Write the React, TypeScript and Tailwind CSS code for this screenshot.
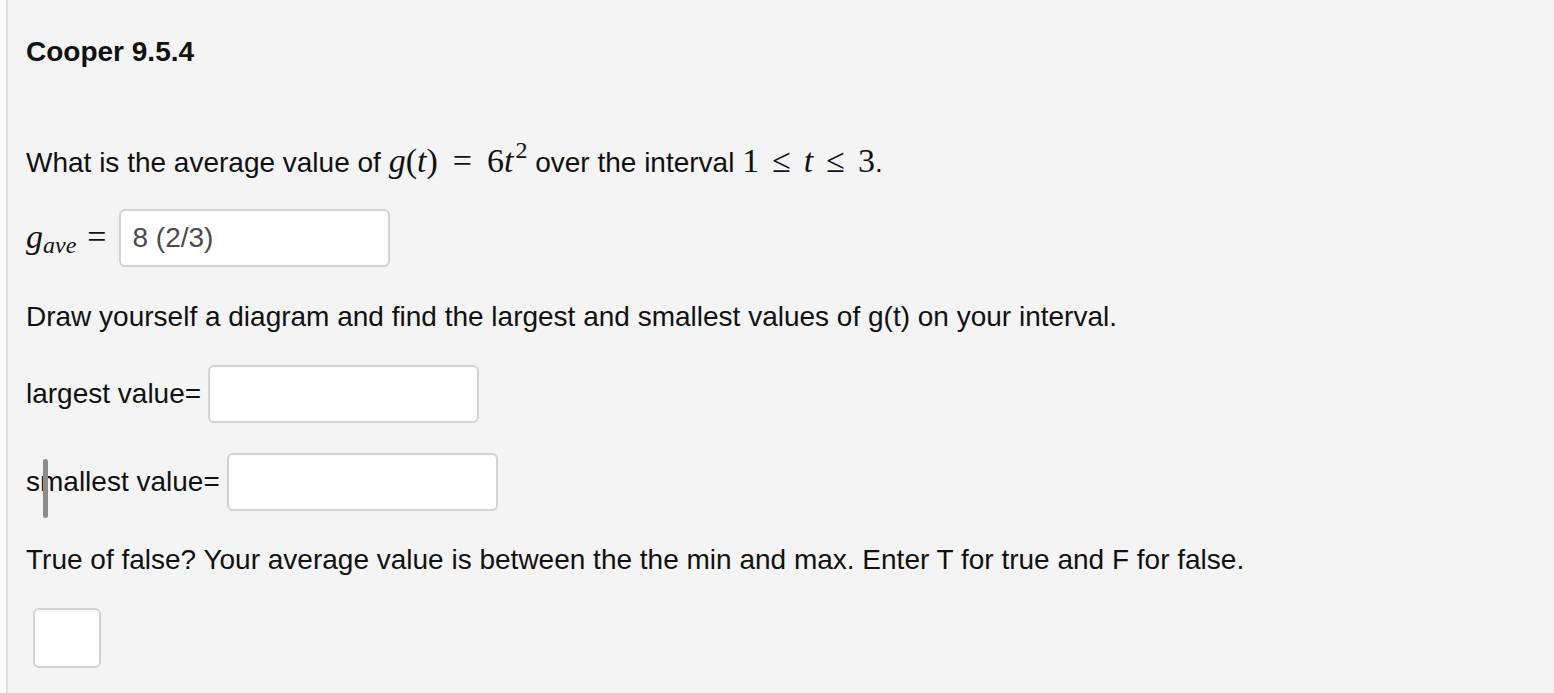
import React from "react";

const serif = { fontFamily: '"Liberation Serif", "DejaVu Serif", serif' } as const;

function MI({ children }: { children: React.ReactNode }) {
  return <span className="italic" style={serif}>{children}</span>;
}
function MU({ children }: { children: React.ReactNode }) {
  return <span style={serif}>{children}</span>;
}

function Box({ w, value }: { w: string; value?: string }) {
  return (
    <div
      className={`${w} h-[58px] rounded-[6px] border-2 border-[#d2d2d2] bg-white flex items-center pl-[12px] text-[28px] text-[#4a4a4a]`}
    >
      {value}
    </div>
  );
}

export default function App() {
  return (
    <div
      className="flex h-[693px] w-full overflow-hidden bg-[#fafafa] text-[#111] text-[28px]"
      style={{ fontFamily: '"Liberation Sans", Arial, sans-serif' }}
    >
      <div className="w-[6px] bg-[#fafafa]" />
      <div className="flex-1 border-l-2 border-[#e0e0e0] bg-[#f4f4f4] pl-[18px] pt-[37px] relative">
        <div className="h-[30px] leading-[30px] font-bold">Cooper 9.5.4</div>

        <div className="mt-[78px] h-[30px] leading-[30px] whitespace-nowrap">
          What is the average value of{" "}
          <span className="text-[34px] leading-[30px]">
            <MI>g</MI>
            <MU>(</MU>
            <MI>t</MI>
            <MU>)</MU>
            <MU>
              <span className="mx-[15px]">=</span>
            </MU>
            <MU>6</MU>
            <MI>t</MI>
            <sup className="text-[24px] relative top-[-14px] ml-[2px]" style={serif}>2</sup>
          </span>{" "}
          over the interval{" "}
          <span className="text-[34px] leading-[30px]">
            <MU>1</MU>
            <MU>
              <span className="mx-[13px]">≤</span>
            </MU>
            <MI>t</MI>
            <MU>
              <span className="mx-[13px]">≤</span>
            </MU>
            <MU>3</MU>
          </span>
          .
        </div>

        <div className="mt-[34px] h-[58px] flex items-center">
          <span className="text-[34px] leading-[30px] whitespace-nowrap">
            <MI>g</MI>
            <span className="italic text-[24px] relative top-[5px]" style={serif}>ave</span>
            <MU>
              <span className="ml-[11px] mr-[12px]">=</span>
            </MU>
          </span>
          <Box w="w-[271px]" value="8 (2/3)" />
        </div>

        <div className="mt-[35px] h-[30px] leading-[30px] whitespace-nowrap">
          Draw yourself a diagram and find the largest and smallest values of g(t) on your interval.
        </div>

        <div className="mt-[33px] h-[58px] flex items-center">
          <span className="whitespace-nowrap mr-[7px]">largest value=</span>
          <Box w="w-[271px]" />
        </div>

        <div className="mt-[30px] h-[58px] flex items-center relative">
          <span className="whitespace-nowrap mr-[7px]">smallest value=</span>
          <Box w="w-[271px]" />
          <div className="absolute left-[17px] top-[6px] w-[5px] h-[59px] rounded-full bg-[#8c8c8c]" />
        </div>

        <div className="mt-[34px] h-[30px] leading-[30px] whitespace-nowrap">
          True of false? Your average value is between the the min and max. Enter T for true and F for false.
        </div>

        <div className="mt-[33px] ml-[7px] w-[68px] h-[60px] rounded-[6px] border-2 border-[#d2d2d2] bg-white" />
      </div>
    </div>
  );
}
